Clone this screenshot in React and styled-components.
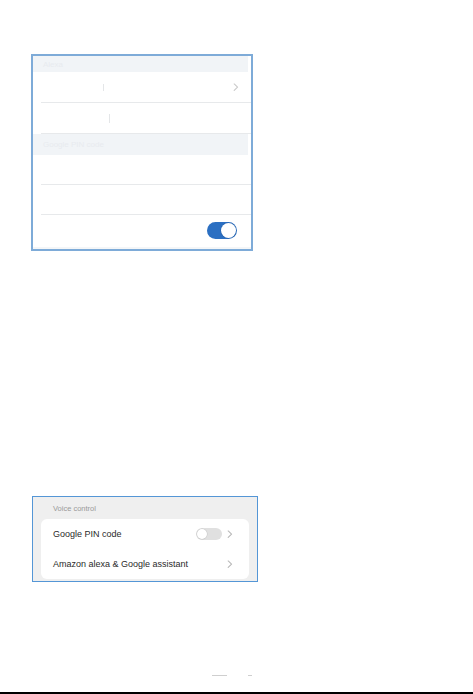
import React from 'react'
import styled, { createGlobalStyle } from 'styled-components'

const GlobalStyle = createGlobalStyle`
    html, body {
        margin: 0;
        padding: 0;
        background: #ffffff;
    }
    body {
        font-family: 'Liberation Sans', Arial, sans-serif;
    }
    *, *::before, *::after {
        box-sizing: border-box;
    }
`

const Page = styled.div`
    width: 473px;
    height: 694px;
    display: flex;
    flex-direction: column;
`

const SettingsShot = styled.section`
    margin: 54px 0 0 31px;
    width: 222px;
    height: 197px;
    border: 2px solid #7eabd8;
    background: #ffffff;
    display: flex;
    flex-direction: column;
`

const Band = styled.div`
    height: ${p => p.h}px;
    margin-right: 3px;
    background: #f1f4f7;
    display: flex;
    align-items: center;
    padding-left: 10px;
    font-size: 8px;
    color: #e8ebef;
    flex-shrink: 0;
`

const Row = styled.div`
    height: ${p => p.h}px;
    margin-left: 8px;
    padding-right: ${p => p.pr || 12}px;
    display: flex;
    align-items: center;
    border-bottom: ${p => (p.last ? 'none' : '1px solid #e7e9eb')};
    font-size: 9px;
    color: #f3f4f5;
    flex-shrink: 0;
`

const Fill = styled.div`
    flex: 1;
    display: flex;
    align-items: center;
`

const Caret = styled.span`
    width: 1px;
    height: ${p => p.h || 7}px;
    margin-left: ${p => p.x}px;
    background: #e4e6e8;
`

const BottomStrip = styled.div`
    flex: 1;
    background: #f4f6f8;
    margin-top: 1px;
`

const Switch = styled.span`
    position: relative;
    width: ${p => p.w}px;
    height: ${p => p.h}px;
    border-radius: ${p => p.h / 2}px;
    background: ${p => (p.on ? '#2b6fc2' : '#e0e0e0')};
    flex-shrink: 0;

    &::after {
        content: '';
        position: absolute;
        top: 1px;
        ${p => (p.on ? 'right: 1px;' : 'left: 1px;')}
        width: ${p => p.h - 2}px;
        height: ${p => p.h - 2}px;
        border-radius: 50%;
        background: #ffffff;
        box-shadow: 0 0 0 0.5px rgba(0, 0, 0, 0.12);
    }
`

const Chevron = ({ color = '#b8b8b8', size = 6 }) => (
    <svg width={size} height={size * 1.4} viewBox="0 0 5 7" fill="none">
        <path d="M1 0.8 L3.8 3.5 L1 6.2" stroke={color} strokeWidth="0.9" strokeLinecap="round" strokeLinejoin="round" />
    </svg>
)

const VoicePanel = styled.section`
    margin: 245px 0 0 32px;
    width: 226px;
    height: 86px;
    border: 1.5px solid #5496d6;
    background: #efefef;
    display: flex;
    flex-direction: column;
    padding: 0 8px 2px 8px;
`

const GroupTitle = styled.div`
    height: 22px;
    padding-left: 12px;
    display: flex;
    align-items: center;
    font-size: 7.5px;
    color: #9a9a9a;
`

const Card = styled.div`
    flex: 1;
    background: #ffffff;
    border-radius: 6px;
    display: flex;
    flex-direction: column;
`

const CardRow = styled.div`
    height: 30px;
    display: flex;
    align-items: center;
    padding: 0 16px 0 12px;
    gap: 5px;
    font-size: 9px;
    color: #2a2a2a;
`

const Label = styled.span`
    flex: 1;
`

const Footer = styled.div`
    margin-top: auto;
    display: flex;
    flex-direction: column;
`

const Marks = styled.div`
    height: 34px;
    display: flex;
    align-items: center;
    padding-left: 212px;
    gap: 21px;
`

const Mark = styled.span`
    width: ${p => p.w}px;
    height: 1px;
    background: #cfcfcf;
`

const BlackBar = styled.div`
    height: 2px;
    background: #000000;
`

const App = () => (
    <>
        <GlobalStyle />
        <Page>
            <SettingsShot>
                <Band h={16}>Alexa</Band>
                <Row h={31}>
                    <Fill>
                        <Caret x={62} />
                    </Fill>
                    <Chevron color="#c9c9c9" />
                </Row>
                <Row h={31}>
                    <Fill>
                        <Caret x={68} h={9} />
                    </Fill>
                </Row>
                <Band h={21}>Google PIN code</Band>
                <Row h={30}>
                    <Fill />
                </Row>
                <Row h={30}>
                    <Fill />
                </Row>
                <Row h={31} last pr={14}>
                    <Fill />
                    <Switch on w={30} h={17} />
                </Row>
                <BottomStrip />
            </SettingsShot>

            <VoicePanel>
                <GroupTitle>Voice control</GroupTitle>
                <Card>
                    <CardRow>
                        <Label>Google PIN code</Label>
                        <Switch w={26} h={12} />
                        <Chevron />
                    </CardRow>
                    <CardRow>
                        <Label>Amazon alexa &amp; Google assistant</Label>
                        <Chevron />
                    </CardRow>
                </Card>
            </VoicePanel>

            <Footer>
                <Marks>
                    <Mark w={15} />
                    <Mark w={4} />
                </Marks>
                <BlackBar />
            </Footer>
        </Page>
    </>
)

export default App
